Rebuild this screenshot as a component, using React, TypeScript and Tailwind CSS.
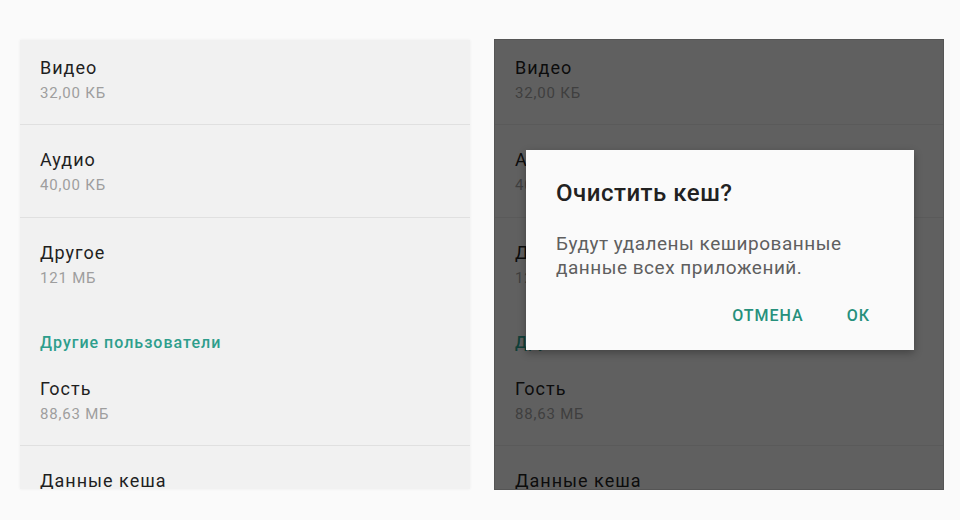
import React from 'react'

const items = [
  { title: 'Видео', size: '32,00 КБ', pt: 'pt-[17px]', pb: 'pb-[21px]', line: true },
  { title: 'Аудио', size: '40,00 КБ', pt: 'pt-[24px]', pb: 'pb-[22px]', line: true },
  { title: 'Другое', size: '121 МБ', pt: 'pt-[24px]', pb: 'pb-0', line: false },
]

function Title({ children }: { children: React.ReactNode }) {
  return <div className="text-[18px] leading-[22px] tracking-[1px] text-[#1f1f1f]">{children}</div>
}

function Size({ children }: { children: React.ReactNode }) {
  return <div className="mt-1 text-[15px] leading-5 tracking-[0.8px] text-[#9e9e9e]">{children}</div>
}

function StorageList() {
  return (
    <div className="flex flex-col">
      {items.map((it) => (
        <div
          key={it.title}
          className={`px-5 ${it.pt} ${it.pb} ${it.line ? 'border-b border-[#e0e0e0]' : ''}`}
        >
          <Title>{it.title}</Title>
          <Size>{it.size}</Size>
        </div>
      ))}
      <div className="px-5 pt-[45px] text-[16px] leading-5 tracking-[1px] font-medium text-[#2e9e8c]">
        Другие пользователи
      </div>
      <div className="px-5 pt-[25px] pb-[21px] border-b border-[#e0e0e0]">
        <Title>Гость</Title>
        <Size>88,63 МБ</Size>
      </div>
      <div className="px-5 pt-[24px]">
        <Title>Данные кеша</Title>
      </div>
    </div>
  )
}

export default function App() {
  return (
    <div
      className="w-[960px] h-[520px] bg-[#fafafa] flex gap-[25px] pl-5 pt-10"
      style={{ fontFamily: 'Roboto, "Noto Sans", sans-serif' }}
    >
      <div className="w-[450px] h-[449px] bg-[#f1f1f1] overflow-hidden shadow-[0_0_3px_rgba(0,0,0,0.06)]">
        <StorageList />
      </div>

      {/* same list, dimmed, with the confirm dialog on top */}
      <div className="relative w-[448px] h-[449px] bg-[#f1f1f1] overflow-hidden ring-1 ring-[#555]">
        <StorageList />
        <div className="absolute inset-0 bg-black/60" />
        <div className="absolute left-[31px] top-[110px] w-[388px] h-[200px] bg-[#fafafa] shadow-[0_3px_8px_rgba(0,0,0,0.3)] flex flex-col">
          <div className="pl-[30px] pt-[29px] text-[24px] leading-7 tracking-[0.5px] font-medium text-[#212121]">
            Очистить кеш?
          </div>
          <div className="pl-[30px] pt-[25px] text-[19px] leading-6 tracking-[0.5px] text-[#5f5f5f]">
            Будут удалены кешированные
            <br />
            данные всех приложений.
          </div>
          <div className="flex justify-end gap-[43px] pr-[44px] pt-[24px] text-[16px] tracking-[1px] font-medium text-[#26907c]">
            <span>ОТМЕНА</span>
            <span>ОК</span>
          </div>
        </div>
      </div>
    </div>
  )
}
